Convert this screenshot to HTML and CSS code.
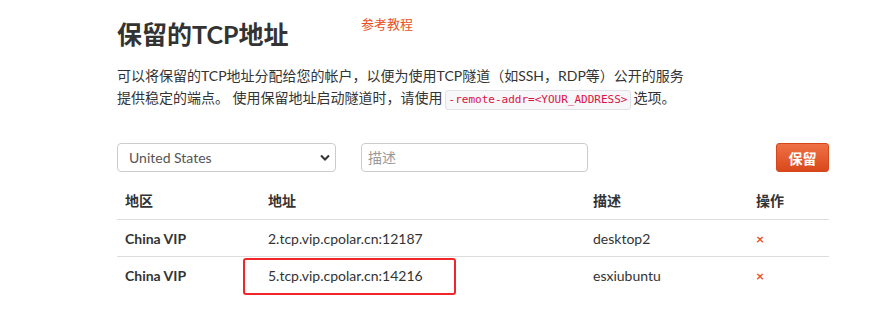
FILE: index.html
```html
<!DOCTYPE html>
<html lang="zh-CN">
<head>
    <meta charset="UTF-8">
    <meta name="viewport" content="width=device-width, initial-scale=1.0">
    <title>保留的TCP地址</title>
    <link rel="stylesheet" href="styles.css">
</head>
<body>
    <div class="container">
        <div class="page-header">
            <h1 class="page-title">保留的TCP地址</h1>
            <a href="#" class="tutorial-link">参考教程</a>
        </div>

        <p class="intro">
            <span>可以将保留的TCP地址分配给您的帐户，以便为使用TCP隧道（如SSH，RDP等）公开的服务</span><br>
            <span>提供稳定的端点。 使用保留地址启动隧道时，请使用</span><code>-remote-addr=&lt;YOUR_ADDRESS&gt;</code><span>选项。</span>
        </p>

        <form class="reserve-form">
            <div class="select-wrap">
                <select class="form-select">
                    <option>United States</option>
                    <option>China VIP</option>
                </select>
                <svg class="select-arrow" width="10" height="7" viewBox="0 0 10 7">
                    <path d="M1 1.5 L5 5.5 L9 1.5" fill="none" stroke="#333" stroke-width="2"/>
                </svg>
            </div>
            <input type="text" class="form-input" placeholder="描述">
            <button type="button" class="btn-reserve">保留</button>
        </form>

        <table class="address-table">
            <thead>
                <tr>
                    <th class="col-region">地区</th>
                    <th class="col-address">地址</th>
                    <th class="col-desc">描述</th>
                    <th class="col-action">操作</th>
                </tr>
            </thead>
            <tbody>
                <tr>
                    <td class="region">China VIP</td>
                    <td>2.tcp.vip.cpolar.cn:12187</td>
                    <td>desktop2</td>
                    <td><span class="delete">&times;</span></td>
                </tr>
                <tr>
                    <td class="region">China VIP</td>
                    <td class="highlighted">5.tcp.vip.cpolar.cn:14216<span class="mark-box"></span></td>
                    <td>esxiubuntu</td>
                    <td><span class="delete">&times;</span></td>
                </tr>
            </tbody>
        </table>
    </div>
</body>
</html>
```

FILE: styles.css
```css
* {
    margin: 0;
    padding: 0;
    box-sizing: border-box;
}

body {
    background-color: #fff;
    color: #333;
    font-family: 'Lato', 'Noto Sans CJK SC', sans-serif;
    font-size: 14px;
}

.container {
    width: 712px;
    margin-left: 117px;
    padding-bottom: 20px;
}

.page-header {
    display: flex;
    align-items: flex-start;
    padding-top: 16px;
}

.page-title {
    width: 244px;
    font-size: 25px;
    font-weight: 700;
    color: #333;
    line-height: 36px;
    white-space: nowrap;
}

.tutorial-link {
    font-size: 13px;
    line-height: 16px;
    color: #e8501e;
    text-decoration: none;
}

.intro {
    width: 600px;
    margin-top: 13px;
    line-height: 22px;
    color: #333;
}

.intro code {
    display: inline-block;
    font-family: 'DejaVu Sans Mono', monospace;
    font-size: 11px;
    line-height: 16px;
    color: #dd1144;
    background-color: #f7f7f9;
    border: 1px solid #e1e1e8;
    border-radius: 3px;
    padding: 1px 3px;
    margin: 0 2px;
    vertical-align: 0;
}

.reserve-form {
    display: flex;
    align-items: center;
    margin-top: 33px;
}

.select-wrap {
    position: relative;
    width: 219px;
}

.form-select {
    display: block;
    width: 100%;
    height: 29px;
    border: 1px solid #ccc;
    border-radius: 4px;
    background: #fff;
    padding: 0 11px;
    font-family: inherit;
    font-size: 14px;
    color: #555;
    appearance: none;
}

.select-arrow {
    position: absolute;
    right: 6px;
    top: 11px;
    pointer-events: none;
}

.form-input {
    width: 227px;
    height: 29px;
    margin-left: 25px;
    border: 1px solid #ccc;
    border-radius: 4px;
    padding: 0 6px;
    font-family: inherit;
    font-size: 14px;
    color: #555;
}

.form-input::placeholder {
    color: #999;
}

.btn-reserve {
    margin-left: auto;
    width: 53px;
    height: 29px;
    border: 1px solid #d4471b;
    border-radius: 3px;
    background: linear-gradient(#ee7246, #d9481a);
    color: #fff;
    font-family: inherit;
    font-size: 14px;
    font-weight: 700;
}

.address-table {
    width: 100%;
    border-collapse: collapse;
    margin-top: 11px;
}

.address-table th,
.address-table td {
    text-align: left;
    padding: 8px;
    line-height: 20px;
    vertical-align: middle;
}

.address-table th {
    font-weight: 600;
    border-bottom: 1px solid #ddd;
}

.address-table td {
    border-top: 1px solid #ddd;
    padding-top: 9px;
    padding-bottom: 7px;
}

.col-region { width: 143px; }
.col-address { width: 325px; }
.col-desc { width: 163px; }
.col-action { width: 81px; }

.region {
    font-weight: 700;
}

.highlighted {
    position: relative;
}

.mark-box {
    position: absolute;
    left: -17px;
    top: 1px;
    width: 213px;
    height: 37px;
    border: 2px solid #f0262a;
    border-radius: 3px;
}

.delete {
    color: #e8501e;
    font-size: 14px;
    font-weight: 700;
}
```
